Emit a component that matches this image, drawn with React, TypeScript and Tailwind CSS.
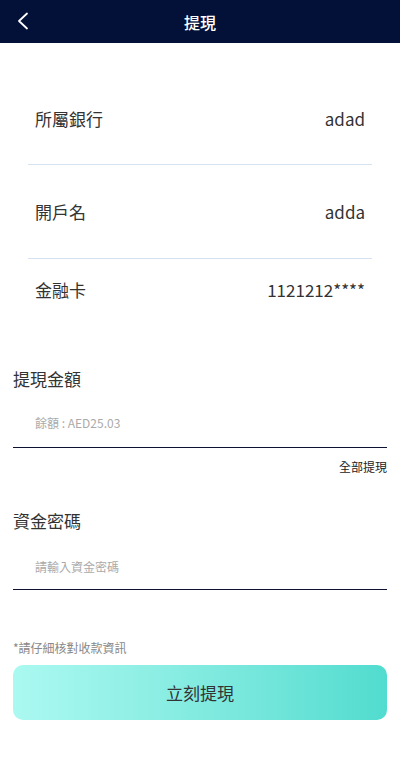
import React from "react";

const font = { fontFamily: '"Noto Sans CJK TC", "Noto Sans", sans-serif' };

function Row({ label, value, cls }: { label: string; value: string; cls: string }) {
  return (
    <div className={`flex items-center justify-between px-[7px] text-[17px] text-[#333] ${cls}`}>
      <span>{label}</span>
      <span>{value}</span>
    </div>
  );
}

export default function App() {
  return (
    <div className="w-[400px] min-h-[774px] bg-white" style={font}>
      <div className="relative h-[43px] bg-[#031038] flex items-center justify-center">
        <svg className="absolute left-[17px] top-[12px]" width="12" height="18" viewBox="0 0 12 18" fill="none">
          <polyline points="10,1.5 2,9 10,16.5" stroke="white" strokeWidth="1.8" strokeLinecap="round" strokeLinejoin="round" />
        </svg>
        <span className="text-white text-[16px] font-medium leading-[20px]">提現</span>
      </div>

      <div className="mx-[28px] mt-[30px]">
        <Row label="所屬銀行" value="adad" cls="h-[92px] border-b border-[#d6e2f1]" />
        <Row label="開戶名" value="adda" cls="h-[94px] border-b border-[#d6e2f1]" />
        <Row label="金融卡" value="1121212****" cls="h-[62px]" />
      </div>

      <div className="mx-[13px]">
        <div className="mt-[46px] text-[17px] leading-[24px] text-[#333]">提現金額</div>
        <div className="pt-[24px] pb-[16px] px-[22px] border-b border-[#0d1233] text-[12px] leading-[16px] text-[#aaa]">
          餘額 : AED25.03
        </div>
        <div className="mt-[11px] text-right text-[12px] leading-[16px] text-[#222]">全部提現</div>

        <div className="mt-[34px] text-[17px] leading-[24px] text-[#333]">資金密碼</div>
        <div className="pt-[26px] pb-[14px] px-[22px] border-b border-[#0d1233] text-[12px] leading-[16px] text-[#aaa]">
          請輸入資金密碼
        </div>

        <div className="mt-[50px] text-[12px] leading-[16px] text-[#888]">*請仔細核對收款資訊</div>
        <div className="mt-[9px] h-[55px] rounded-[10px] bg-linear-to-r from-[#abf9f1] to-[#50dccf] flex items-center justify-center text-[17px] text-[#333]">
          立刻提現
        </div>
      </div>
    </div>
  );
}
